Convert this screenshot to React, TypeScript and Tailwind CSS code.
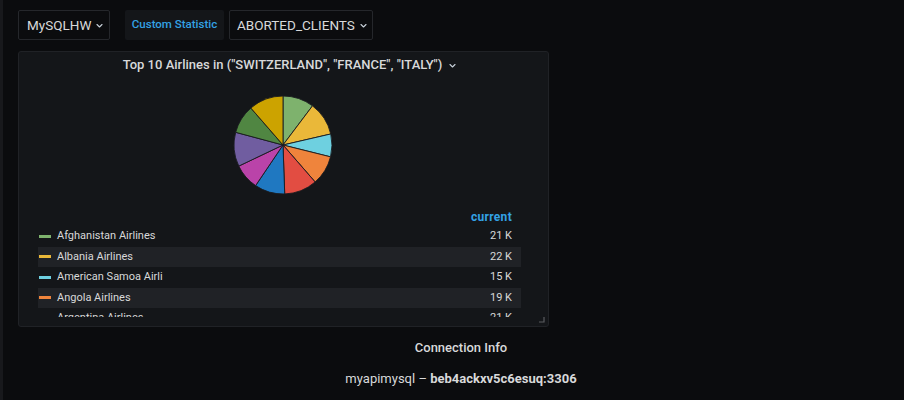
import React from "react";

const slices = [
  { c: "#7eb26d", a: 37 },
  { c: "#eab839", a: 40 },
  { c: "#6ed0e0", a: 27 },
  { c: "#ef843c", a: 35 },
  { c: "#e24d42", a: 39 },
  { c: "#1f78c1", a: 36 },
  { c: "#ba43a9", a: 30.5 },
  { c: "#705da0", a: 40.5 },
  { c: "#508642", a: 34 },
  { c: "#cca300", a: 41 },
];

function Pie() {
  const cx = 50;
  const cy = 50;
  const r = 49;
  let start = 0;
  const paths = slices.map((s, i) => {
    const a0 = (start * Math.PI) / 180;
    const a1 = ((start + s.a) * Math.PI) / 180;
    start += s.a;
    const x0 = cx + r * Math.sin(a0);
    const y0 = cy - r * Math.cos(a0);
    const x1 = cx + r * Math.sin(a1);
    const y1 = cy - r * Math.cos(a1);
    const large = s.a > 180 ? 1 : 0;
    const d = `M${cx} ${cy} L${x0.toFixed(2)} ${y0.toFixed(2)} A${r} ${r} 0 ${large} 1 ${x1.toFixed(2)} ${y1.toFixed(2)} Z`;
    return <path key={i} d={d} fill={s.c} stroke="#1a1b1f" strokeWidth={0.9} />;
  });
  return (
    <svg width="100" height="100" viewBox="0 0 100 100">
      {paths}
    </svg>
  );
}

function Chevron({ ml }: { ml: string }) {
  return (
    <svg width="7" height="7" viewBox="0 0 7 7" className={ml}>
      <path d="M1 2.5 L3.5 5 L6 2.5" fill="none" stroke="#c7d0d9" strokeWidth="1.1" strokeLinecap="round" strokeLinejoin="round" />
    </svg>
  );
}

const legend = [
  { name: "Afghanistan Airlines", v: "21 K", c: "#7eb26d" },
  { name: "Albania Airlines", v: "22 K", c: "#eab839" },
  { name: "American Samoa Airli", v: "15 K", c: "#6ed0e0" },
  { name: "Angola Airlines", v: "19 K", c: "#ef843c" },
  { name: "Argentina Airlines", v: "21 K", c: "#e24d42" },
];

export default function App() {
  return (
    <div
      className="w-[904px] h-[400px] bg-[#0b0c0e] flex overflow-hidden text-[#d8d9da]"
      style={{ fontFamily: "Roboto, 'Liberation Sans', sans-serif" }}
    >
      <div className="w-[3px] h-full bg-[#18191c] shrink-0" />
      <div className="flex-1 flex flex-col pl-[15px] pt-[10px]">
        <div className="flex items-center h-[30px]">
          <div className="h-[30px] w-[92px] border border-[#25272b] rounded-[2px] bg-[#0b0c0e] flex items-center pl-[8px] text-[13.5px] text-[#d8d9da]">
            MySQLHW
            <Chevron ml="ml-[5px]" />
          </div>
          <div className="ml-[15px] h-[30px] w-[99px] rounded-[2px] bg-[#141619] flex items-center justify-center text-[11.5px] text-[#33a2e5] font-medium">
            Custom Statistic
          </div>
          <div className="ml-[5px] h-[30px] w-[144px] border border-[#25272b] rounded-[2px] bg-[#0b0c0e] flex items-center pl-[7px] text-[13.5px] text-[#d8d9da]">
            ABORTED_CLIENTS
            <Chevron ml="ml-[5px]" />
          </div>
        </div>

        <div className="mt-[11px] w-[531px] h-[276px] bg-[#141619] border border-[#202226] rounded-[3px] relative flex flex-col">
          <div className="h-[26px] flex items-center justify-center pl-[12px] text-[13px] font-medium text-[#d8d9da]">
            Top 10 Airlines in ("SWITZERLAND", "FRANCE", "ITALY")
            <Chevron ml="ml-[7px]" />
          </div>
          <div className="flex justify-center mt-[17px] ml-[-1px]">
            <Pie />
          </div>
          <div className="mt-[15px] ml-[19px] mr-[27px] flex justify-end pr-[9px] h-[13px] items-center text-[12px] font-bold text-[#33a2e5] tracking-[0.3px]">
            current
          </div>
          <div className="ml-[19px] mr-[27px] mt-[3px] h-[91px] overflow-hidden">
            {legend.map((l, i) => (
              <div
                key={i}
                className={`h-[20.5px] flex items-center text-[11px] text-[#d8d9da] ${i % 2 === 1 ? "bg-[#202226]" : ""}`}
              >
                <div className="w-[12px] h-[3px] ml-[1px]" style={{ backgroundColor: l.c }} />
                <div className="ml-[6px] flex-1">{l.name}</div>
                <div className="pr-[9px]">{l.v}</div>
              </div>
            ))}
          </div>
          <svg width="6" height="6" viewBox="0 0 6 6" className="absolute right-[3px] bottom-[3px]">
            <path d="M5 0 V5 H0" fill="none" stroke="#5a5c60" strokeWidth="1.2" />
          </svg>
        </div>

        <div className="flex flex-col items-center mt-[13px]">
          <div className="text-[13px] font-medium text-[#d8d9da] h-[16px] leading-[16px]">Connection Info</div>
          <div className="mt-[15px] text-[13px] text-[#d8d9da] h-[16px] leading-[16px]">
            myapimysql – <span className="font-bold">beb4ackxv5c6esuq:3306</span>
          </div>
        </div>
      </div>
    </div>
  );
}
